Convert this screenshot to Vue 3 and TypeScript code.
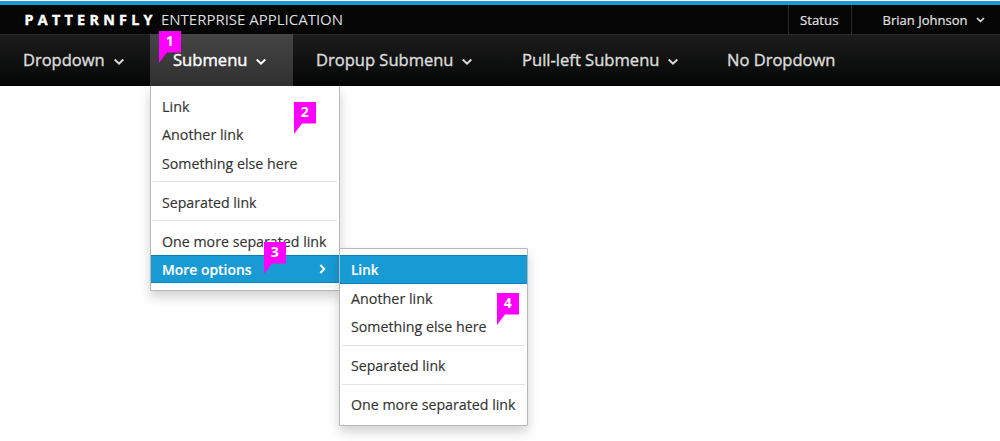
<script setup lang="ts">
interface NavItem { label: string; width: number; caret: boolean; active?: boolean }
interface MenuItem { label: string; width: number; divided?: boolean; active?: boolean; arrow?: boolean }
interface Marker { id: number; x: number; y: number }

const nav: NavItem[] = [
  { label: 'Dropdown', width: 82, caret: true },
  { label: 'Submenu', width: 75, caret: true, active: true },
  { label: 'Dropup Submenu', width: 138, caret: true },
  { label: 'Pull-left Submenu', width: 138, caret: true },
  { label: 'No Dropdown', width: 109, caret: false },
]
const links: MenuItem[] = [
  { label: 'Link', width: 28 },
  { label: 'Another link', width: 82 },
  { label: 'Something else here', width: 136 },
  { label: 'Separated link', width: 95, divided: true },
  { label: 'One more separated link', width: 165, divided: true },
]
const menus: MenuItem[][] = [
  [...links, { label: 'More options', width: 90, active: true, arrow: true }],
  links.map((item, i) => ({ ...item, active: i === 0 })),
]
const markers: Marker[] = [
  { id: 1, x: 159, y: 31 },
  { id: 2, x: 294, y: 102 },
  { id: 3, x: 264, y: 242 },
  { id: 4, x: 497, y: 293 },
]
</script>

<template>
  <div class="page">
    <header>
      <div class="utility">
        <div class="brand">
          <svg width="330" height="29">
            <text class="logo" x="24.5" y="20.2" textLength="128">PATTERNFLY</text>
            <text class="product" x="161" y="20.2" textLength="182" lengthAdjust="spacingAndGlyphs">ENTERPRISE APPLICATION</text>
          </svg>
        </div>
        <div class="status">
          <svg width="40" height="29"><text x="0" y="19.7" textLength="38.5" lengthAdjust="spacingAndGlyphs">Status</text></svg>
        </div>
        <div class="user">
          <svg width="87" height="29"><text x="0.5" y="19.7" textLength="85" lengthAdjust="spacingAndGlyphs">Brian Johnson</text></svg>
          <svg class="small-caret" width="9" height="6" viewBox="0 0 9 6"><path d="M1 1 4.5 4.3 8 1" /></svg>
        </div>
      </div>
      <nav>
        <a v-for="item in nav" :key="item.label" :class="{ active: item.active }">
          <svg :width="item.width" height="51"><text x="0" y="31" :textLength="item.width - 0.5" lengthAdjust="spacingAndGlyphs">{{ item.label }}</text></svg>
          <svg v-if="item.caret" class="caret" width="12" height="8" viewBox="0 0 12 8"><path d="M1.7 1.5 6 5.6 10.3 1.5" /></svg>
        </a>
      </nav>
    </header>

    <ul v-for="(menu, index) in menus" :key="index" class="menu" :class="index ? 'child' : 'root'">
      <template v-for="item in menu" :key="item.label">
        <li v-if="item.divided" class="divider"></li>
        <li class="entry" :class="{ selected: item.active }">
          <svg :width="item.width" height="28"><text x="0" y="19.5" :textLength="item.width - 0.5" lengthAdjust="spacingAndGlyphs">{{ item.label }}</text></svg>
          <svg v-if="item.arrow" class="arrow" width="7" height="10" viewBox="0 0 7 10"><path d="M1.3 1 5.3 5 1.3 9" /></svg>
        </li>
      </template>
    </ul>

    <div v-for="marker in markers" :key="marker.id" class="marker" :style="{ left: marker.x + 'px', top: marker.y + 'px' }">
      <svg width="22" height="32" viewBox="0 0 22 32">
        <path d="M0 0H22V21.5H8L0 32Z" />
        <text x="10.8" y="15.2" text-anchor="middle">{{ marker.id }}</text>
      </svg>
    </div>
  </div>
</template>

<style>
body { background: #fff; }
</style>

<style scoped>
.page {
  position: relative;
  width: 1000px;
  height: 441px;
  overflow: hidden;
  font-family: "Open Sans", "Noto Sans", sans-serif;
}
svg { display: block; flex: none; overflow: visible; }
header { padding-top: 1px; }
.utility {
  display: flex;
  height: 29px;
  border-top: 4px solid #189ad6;
  background: #050505;
  color: #e0e0e0;
  font-size: 13px;
}
.utility text, nav text { fill: currentColor; }
.status text, .user text { stroke: currentColor; stroke-width: .2px; }
.brand { flex: 1; }
.brand .logo { font-size: 14.3px; font-weight: 700; fill: #fff; stroke: #fff; stroke-width: .4px; }
.brand .product { font-size: 14.4px; font-weight: 400; fill: #ddd; }
.status {
  box-sizing: border-box;
  width: 63px;
  padding-left: 11px;
  border-left: 1px solid #2b2b2b;
}
.user {
  display: flex;
  box-sizing: border-box;
  width: 149px;
  padding-left: 30px;
  border-left: 1px solid #2b2b2b;
}
.small-caret { margin: 11.5px 0 0 7px; }
nav {
  display: flex;
  box-sizing: border-box;
  height: 52px;
  border-top: 1px solid #292929;
  background: linear-gradient(#1c1c1c, #090a0a 82%, #050505);
  color: #dbdbdb;
}
nav a {
  display: flex;
  height: 51px;
  padding: 0 25.1px 0 23.2px;
  font-size: 17px;
}
nav text { stroke: currentColor; stroke-width: .4px; }
nav a.active {
  margin-top: -1px;
  padding-top: 1px;
  background: linear-gradient(#454545, #303030);
  color: #fff;
}
.caret { margin: 22.5px 0 0 7.5px; }
.caret path, .small-caret path, .arrow path { fill: none; stroke: currentColor; stroke-width: 2; }
.small-caret path { stroke-width: 1.7; }
.menu {
  position: absolute;
  box-sizing: border-box;
  margin: 0;
  padding: 6px 0 0;
  list-style: none;
  background: #fff;
  border: 1px solid #b8b8b8;
  border-radius: 1px;
  box-shadow: 0 6px 12px rgba(0, 0, 0, .18);
  font-size: 14.2px;
  color: #333;
}
.root { left: 149.5px; top: 86px; width: 190px; height: 204.5px; border-top: 0; }
.child { left: 339px; top: 248px; width: 189px; height: 177.5px; }
.entry {
  display: flex;
  box-sizing: border-box;
  height: 28.4px;
  padding-left: 11.4px;
}
.child .entry { height: 28.5px; padding-left: 10.7px; }
.entry text { fill: currentColor; stroke: currentColor; stroke-width: .15px; }
.divider { height: 1px; margin: 4px 2px 5.5px; background: #e3e3e3; }
.selected {
  color: #fff;
  background: #189ad4;
  font-weight: 600;
  box-shadow: inset 0 1px #0b82b9, inset 0 -1px #0b82b9;
}
.arrow { margin: 9.5px 0 0 67.5px; }
.marker { position: absolute; z-index: 2; }
.marker path { fill: #f0f; }
.marker text { fill: #fff; font-size: 14px; font-weight: 700; }
</style>
